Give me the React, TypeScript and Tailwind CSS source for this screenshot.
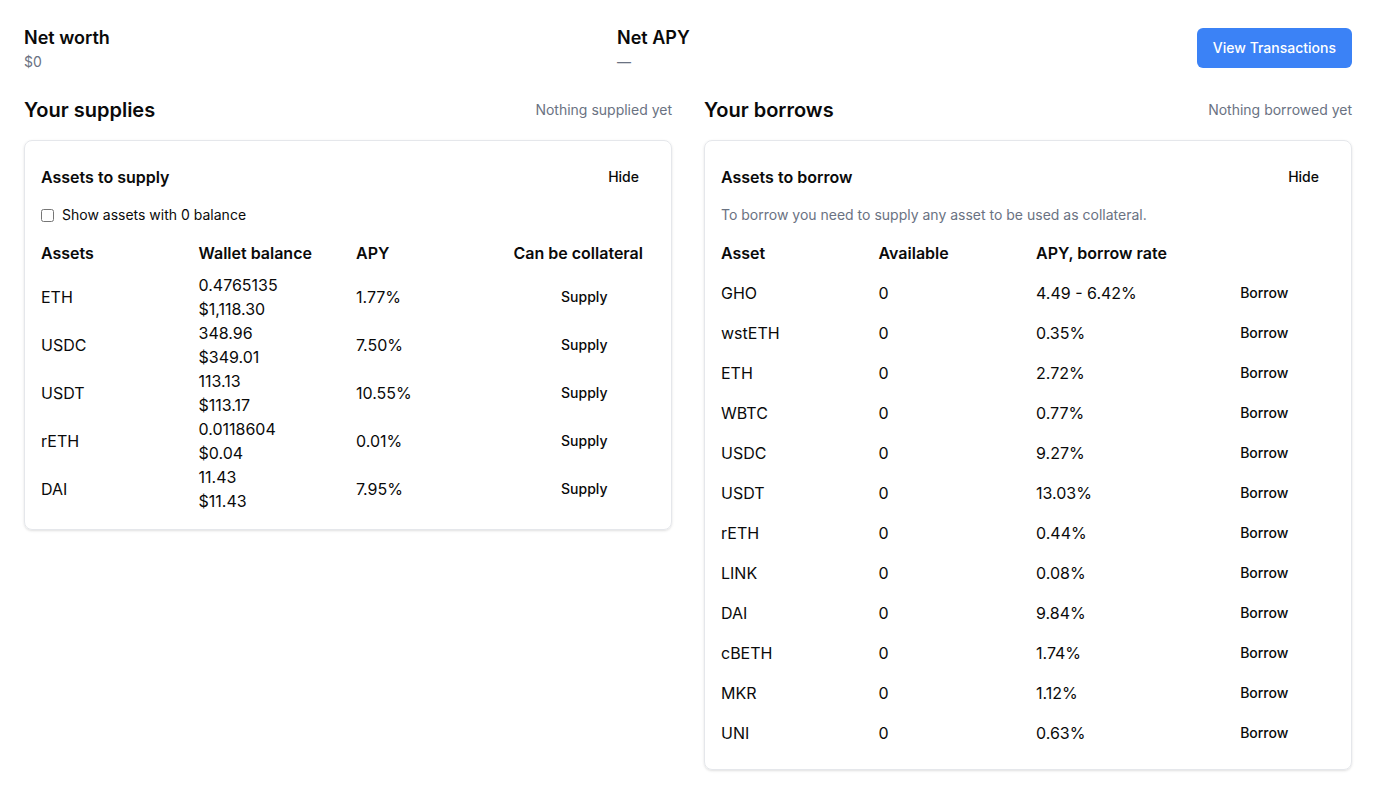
import React from 'react'

const supplies = [
  { asset: 'ETH', balance: '0.4765135', usd: '$1,118.30', apy: '1.77%' },
  { asset: 'USDC', balance: '348.96', usd: '$349.01', apy: '7.50%' },
  { asset: 'USDT', balance: '113.13', usd: '$113.17', apy: '10.55%' },
  { asset: 'rETH', balance: '0.0118604', usd: '$0.04', apy: '0.01%' },
  { asset: 'DAI', balance: '11.43', usd: '$11.43', apy: '7.95%' },
]

const borrows = [
  { asset: 'GHO', apy: '4.49 - 6.42%' },
  { asset: 'wstETH', apy: '0.35%' },
  { asset: 'ETH', apy: '2.72%' },
  { asset: 'WBTC', apy: '0.77%' },
  { asset: 'USDC', apy: '9.27%' },
  { asset: 'USDT', apy: '13.03%' },
  { asset: 'rETH', apy: '0.44%' },
  { asset: 'LINK', apy: '0.08%' },
  { asset: 'DAI', apy: '9.84%' },
  { asset: 'cBETH', apy: '1.74%' },
  { asset: 'MKR', apy: '1.12%' },
  { asset: 'UNI', apy: '0.63%' },
]

const cols = 'grid grid-cols-[157.5px_157.5px_157.5px_1fr] items-center'

function CardHeader({ title }: { title: string }) {
  return (
    <div className="flex items-center justify-between h-10">
      <h3 className="text-base font-semibold">{title}</h3>
      <button className="h-10 px-4 text-sm font-medium rounded-md hover:bg-gray-100">Hide</button>
    </div>
  )
}

export default function App() {
  return (
    <div className="min-h-screen bg-white p-6 text-[#0a0a0a] font-['Inter',sans-serif]">
      <div className="flex items-center justify-between">
        <div>
          <div className="text-lg font-semibold">Net worth</div>
          <div className="text-sm text-gray-500">$0</div>
        </div>
        <div>
          <div className="text-lg font-semibold">Net APY</div>
          <div className="text-sm text-gray-500">—</div>
        </div>
        <button className="h-10 px-4 rounded-md bg-[#3b82f6] text-white text-sm font-medium">
          View Transactions
        </button>
      </div>

      <div className="mt-6 grid grid-cols-2 gap-8 items-start">
        <section>
          <div className="flex items-center justify-between mb-4">
            <h2 className="text-xl font-semibold">Your supplies</h2>
            <span className="text-sm text-gray-500">Nothing supplied yet</span>
          </div>
          <div className="rounded-lg border border-gray-200 shadow-sm p-4">
            <CardHeader title="Assets to supply" />
            <label className="mt-2 flex items-center gap-2 text-sm h-5">
              <input type="checkbox" className="w-[13px] h-[13px]" />
              Show assets with 0 balance
            </label>
            <div className="mt-2">
              <div className={`${cols} py-2 font-semibold`}>
                <div>Assets</div>
                <div>Wallet balance</div>
                <div>APY</div>
                <div>Can be collateral</div>
              </div>
              {supplies.map(s => (
                <div key={s.asset} className={cols}>
                  <div>{s.asset}</div>
                  <div>
                    <div>{s.balance}</div>
                    <div>{s.usd}</div>
                  </div>
                  <div>{s.apy}</div>
                  <div className="flex justify-center">
                    <button className="text-sm font-medium">Supply</button>
                  </div>
                </div>
              ))}
            </div>
          </div>
        </section>

        <section>
          <div className="flex items-center justify-between mb-4">
            <h2 className="text-xl font-semibold">Your borrows</h2>
            <span className="text-sm text-gray-500">Nothing borrowed yet</span>
          </div>
          <div className="rounded-lg border border-gray-200 shadow-sm p-4">
            <CardHeader title="Assets to borrow" />
            <p className="mt-2 text-sm text-gray-500 h-5">
              To borrow you need to supply any asset to be used as collateral.
            </p>
            <div className="mt-2">
              <div className={`${cols} py-2 font-semibold`}>
                <div>Asset</div>
                <div>Available</div>
                <div>APY, borrow rate</div>
                <div></div>
              </div>
              {borrows.map(b => (
                <div key={b.asset} className={`${cols} py-2`}>
                  <div>{b.asset}</div>
                  <div>0</div>
                  <div>{b.apy}</div>
                  <div className="flex justify-center">
                    <button className="text-sm font-medium">Borrow</button>
                  </div>
                </div>
              ))}
            </div>
          </div>
        </section>
      </div>
    </div>
  )
}
